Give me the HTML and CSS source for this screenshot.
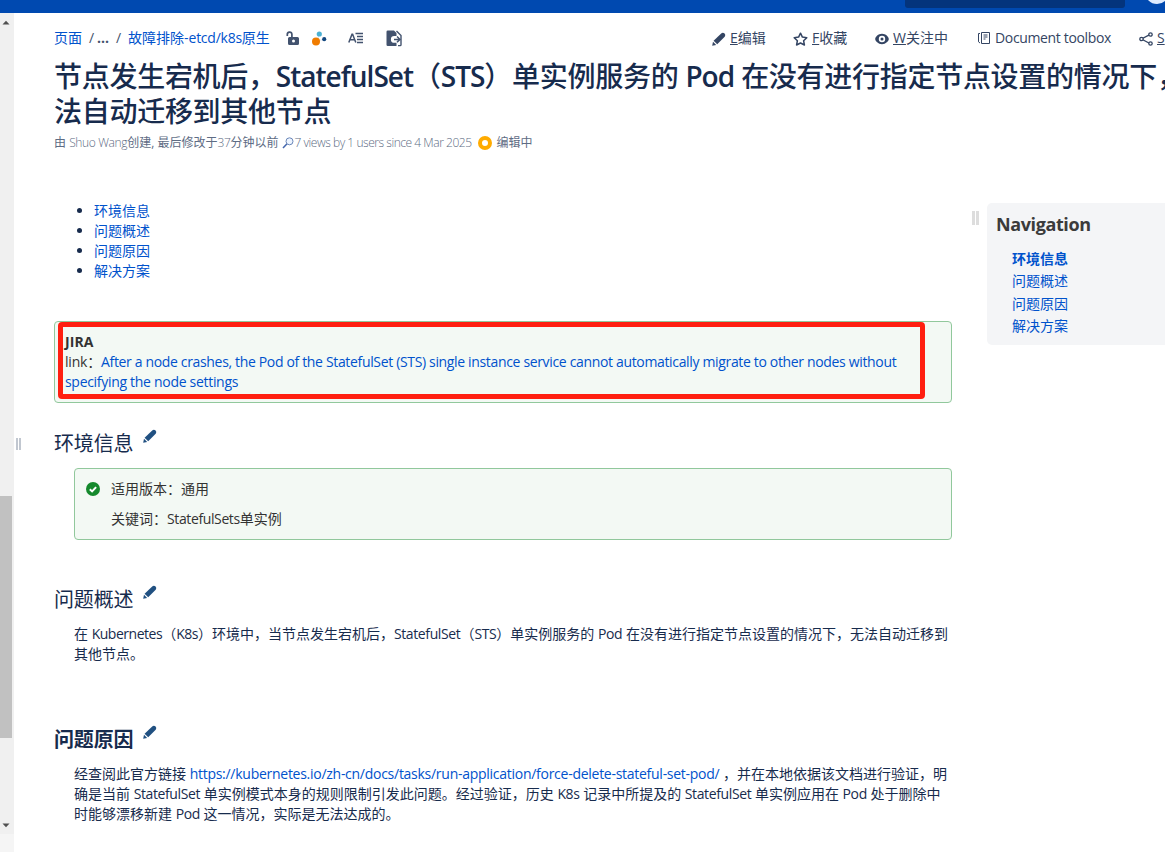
FILE: index.html
```html
<!DOCTYPE html>
<html lang="zh-CN">
<head>
<meta charset="utf-8">
<title>Confluence</title>
<link rel="stylesheet" href="styles.css">
</head>
<body>
<svg width="0" height="0" class="defs">
  <symbol id="pencil" viewBox="0 0 14 14"><path d="M1.600 8.700 9.200 1.400Q11 0 12.600 1.600 14 3.200 12.700 4.700L5.200 12.300Z"/><path d="M1 9.800 4.200 13 .2 13.800Z"/></symbol>
</svg>
<div class="app">
  <header class="topbar"><div class="search"></div><div class="help"></div></header>
  <div class="body">
    <aside class="rail">
      <svg class="arrow-up" width="8" height="5" viewBox="0 0 8 5"><path d="M.5 4.500h7L4 .8Z"/></svg>
      <div class="thumb"></div>
      <svg class="arrow-down" width="8" height="5" viewBox="0 0 8 5"><path d="M.5.5h7L4 4.200Z"/></svg>
      <div class="rail-end"></div>
    </aside>
    <div class="splitter"><i></i><i></i></div>
    <main class="page">
      <div class="toolbar">
        <nav class="crumbs">
          <a>页面</a><span>/</span><b>...</b><span>/</span><a>故障排除-<span class="path">etcd/k8s</span>原生</a>
          <svg width="14" height="15" viewBox="0 0 14 15"><path d="M1.300 5V3.600a2.300 2.300 0 0 1 4.600-.3V7" fill="none" stroke="#42526e" stroke-width="1.700"/><path fill-rule="evenodd" d="M3.500 6h8A1.500 1.500 0 0 1 13 7.500v5a1.500 1.500 0 0 1-1.500 1.500h-8A1.500 1.500 0 0 1 2 12.500v-5A1.500 1.500 0 0 1 3.500 6Zm4 2.600a1.500 1.500 0 1 0 0 3 1.500 1.500 0 0 0 0-3Z"/></svg>
          <svg width="15" height="15" viewBox="0 0 15 15"><path d="M5 10 7.500 3.500M5 10l7-1.700" stroke="#d9dde5" stroke-width=".8"/><circle cx="4" cy="10.400" r="4" fill="#f07c00"/><circle cx="7.300" cy="3" r="2.600" fill="#4cb1d3"/><circle cx="12.200" cy="8.200" r="2.100" fill="#12477f"/></svg>
          <svg width="16" height="12" viewBox="0 0 16 12"><path d="M.8 10.500 4 2.200h.6l3.200 8.300M2 7.800h4.700" fill="none" stroke="#42526e" stroke-width="1.500"/><path d="M7.500 1.500H15M9 4.500h6M9 7.500h6M9 10.500h6" stroke="#42526e" stroke-width="1.300"/></svg>
          <svg width="17" height="17" viewBox="0 0 17 17"><path d="M1.800.5H8L10.500 3v3H8.300a3.400 3.400 0 0 0 0 6.800h2.200V16H1.800A1.300 1.300 0 0 1 .5 14.700V1.800A1.300 1.300 0 0 1 1.800.5Z"/><path d="M10.500 1 15 5.500v9.200a.9.900 0 0 1-.9.900H12" fill="none" stroke="#42526e" stroke-width="1.400"/><path d="M9 7.300H7.800a2 2 0 0 0 0 4H9M7.500 9.300h6" fill="none" stroke="#fff" stroke-width="1.300"/><path d="M8 9.400h5M11 6.500l3 2.900-3 2.900" fill="none" stroke="#42526e" stroke-width="1.500"/></svg>
        </nav>
        <div class="actions">
          <a><svg width="14" height="14"><use href="#pencil"/></svg><span><u>E</u>编辑</span></a>
          <a><svg width="15" height="14" viewBox="0 0 15 14"><path d="m7.500 1.200 1.900 3.900 4.400.6-3.200 3 .8 4.300-3.900-2-3.900 2 .8-4.300-3.200-3 4.400-.6Z" fill="none" stroke="#344563" stroke-width="1.500" stroke-linejoin="round"/></svg><span><u>F</u>收藏</span></a>
          <a><svg width="14" height="12" viewBox="0 0 14 12"><path fill-rule="evenodd" d="M7 .8c3.700 0 6.800 3.200 6.800 5.200S10.700 11.200 7 11.200.2 8 .2 6 3.300.8 7 .8Zm0 2a3.200 3.200 0 1 0 0 6.400 3.200 3.200 0 0 0 0-6.400Z"/><circle cx="7" cy="6" r="1.500"/></svg><span><u>W</u>关注中</span></a>
          <a><svg class="doc" width="12" height="12" viewBox="0 0 12 12"><path d="M3.500.5h8v11h-8ZM2 1.500H.5v8.300L2 11M5.500 3h4M5.500 5h4M5.500 7h2" fill="none" stroke="#344563"/></svg><span class="toolbox">Document toolbox</span></a>
          <a><svg width="14" height="14" viewBox="0 0 14 14"><path d="M10.800 2.600 2.500 7l8.300 4.500" fill="none" stroke="#344563" stroke-width="1.300"/><g fill="#fff" stroke="#344563" stroke-width="1.300"><circle cx="11.500" cy="2.500" r="1.700"/><circle cx="2.500" cy="7" r="1.700"/><circle cx="11.500" cy="11.500" r="1.700"/></g></svg><span><u>S</u></span></a>
        </div>
      </div>
      <h1>节点发生宕机后，<span class="en">StatefulSet</span>（<span class="en">STS</span>）单实例服务的 <span class="en">Pod</span> 在没有进行指定节点设置的情况下，<br>法自动迁移到其他节点</h1>
      <div class="meta"><span class="by">由 <span class="en">Shuo Wang</span>创建, 最后修改于<span class="en">37</span>分钟以前</span>
        <svg width="12" height="12" viewBox="0 0 12 12"><circle cx="7.500" cy="4.300" r="3.500" fill="#eef5ff" stroke="#6a86b8"/><path d="M4.800 7 1 11" stroke="#4366ad" stroke-width="1.500"/></svg>
        <span class="views">7 views by 1 users since 4 Mar 2025</span><i class="ring"></i><span>编辑中</span></div>
      <div class="columns">
        <article class="content">
          <ul class="toc"><li><a>环境信息</a></li><li><a>问题概述</a></li><li><a>问题原因</a></li><li><a>解决方案</a></li></ul>
          <section class="panel jira"><b>JIRA</b><br><span class="link">link：</span><a class="l1">After a node crashes, the Pod of the StatefulSet (STS) single instance service cannot automatically migrate to other nodes without</a><br><a class="l2">specifying the node settings</a><div class="highlight"></div></section>
          <h2 class="env">环境信息<svg width="14" height="14"><use href="#pencil"/></svg></h2>
          <section class="panel tip">
            <svg width="14" height="14" viewBox="0 0 14 14"><circle cx="7" cy="7" r="7" fill="#14892c"/><path d="m3.800 7.200 2.300 2.200 4-4.300" fill="none" stroke="#fff" stroke-width="2"/></svg>
            <div><p>适用版本：通用</p><p>关键词：<span class="en">StatefulSets</span>单实例</p></div>
          </section>
          <h2 class="overview">问题概述<svg width="14" height="14"><use href="#pencil"/></svg></h2>
          <p class="para">在 <span class="en k8s">Kubernetes</span>（<span class="en k8s">K8s</span>）环境中，当节点发生宕机后，<span class="en">StatefulSet</span>（<span class="en">STS</span>）单实例服务的 <span class="en">Pod</span> 在没有进行指定节点设置的情况下，无法自动迁移到<br>其他节点。</p>
          <h2 class="cause">问题原因<svg width="14" height="14"><use href="#pencil"/></svg></h2>
          <p class="para">经查阅此官方链接 <a class="url">https://kubernetes.io/zh-cn/docs/tasks/run-application/force-delete-stateful-set-pod/</a> ，并在本地依据该文档进行验证，明<br>确是当前 <span class="en">StatefulSet</span> 单实例模式本身的规则限制引发此问题。经过验证，历史 <span class="en">K8s</span> 记录中所提及的 <span class="en">StatefulSet</span> 单实例应用在 <span class="en">Pod</span> 处于删除中<br>时能够漂移新建 <span class="en">Pod</span> 这一情况，实际是无法达成的。</p>
        </article>
        <div class="grip"><i></i><i></i></div>
        <aside class="nav"><h3>Navigation</h3><a class="current">环境信息</a><a>问题概述</a><a>问题原因</a><a>解决方案</a></aside>
      </div>
    </main>
  </div>
</div>
</body>
</html>
```
FILE: styles.css
```css
* { box-sizing: border-box; }
body { margin: 0; overflow: hidden; background: #fff; color: #172b4d; font: 14px/20px "Open Sans", "Noto Sans CJK SC", sans-serif; text-autospace: no-autospace; text-spacing-trim: space-all; }
h1, h2, h3, p, ul { margin: 0; padding: 0; }
a { color: #0052cc; text-decoration: none; }
svg { display: block; flex: none; fill: #42526e; }
.defs { position: absolute; }
.en { letter-spacing: -.38px; }
.k8s { letter-spacing: -.48px; }
.path { letter-spacing: -.25px; }
.url { letter-spacing: -.27px; }
.app { width: 1165px; height: 852px; overflow: hidden; display: flex; flex-direction: column; }
.topbar { height: 13px; flex: none; background: #0049b0; display: flex; padding-left: 905px; overflow: hidden; }
.search { width: 220px; height: 8px; flex: none; background: #04347c; border-radius: 0 0 3px 3px; }
.help { width: 24px; height: 24px; flex: none; margin: -20px 0 0 20px; border-radius: 50%; background: #deebff; }
.body { display: flex; flex: 1; min-height: 0; }
.rail { width: 14px; flex: none; background: #f0f0f0; display: flex; flex-direction: column; }
.rail svg { fill: #505050; margin-left: 2px; }
.rail .arrow-up { margin-top: 7px; }
.thumb { width: 12px; height: 242px; margin-top: 471px; background: #c1c1c1; }
.rail .arrow-down { margin-top: 85px; }
.rail-end { margin-top: 6px; flex: 1; background: #f5f5f5; }
.splitter { width: 40px; flex: none; display: flex; gap: 1px; padding: 425px 0 0 2px; }
.splitter i { width: 2px; height: 12px; background: #c1c7d0; }
.page { flex: 1; min-width: 0; overflow: hidden; white-space: nowrap; }
.toolbar { height: 46px; display: flex; padding: 4px 0; }
.crumbs { width: 658px; flex: none; display: grid; grid-template-columns: 35px 8px 19px 12px 158px 26px 36px 38px 20px; align-items: center; padding-top: 4px; }
.crumbs span, .crumbs b { color: #42526e; }
.crumbs a span { color: inherit; }
.actions { flex: none; display: grid; grid-template-columns: 81px 82px 103px 161px 30px; align-items: center; padding-top: 4px; }
.actions a { display: flex; align-items: center; gap: 4px; color: #344563; }
.actions svg { fill: #344563; margin-top: 2px; }
.actions .doc { margin-top: 0; margin-right: 1px; }
.toolbox { letter-spacing: -.35px; }
h1 { font-size: 28px; line-height: 35px; font-weight: 500; letter-spacing: -.28px; }
h1 .en { font-weight: 600; letter-spacing: -1px; }
.meta { height: 20px; margin-top: 4px; display: flex; align-items: center; font-size: 12px; color: #5e6c84; }
.meta .en { font-weight: 300; letter-spacing: -.35px; }
.views { font-weight: 300; letter-spacing: -.46px; }
.meta svg { margin-left: 4px; }
.ring { width: 14px; height: 14px; border: 4.500px solid #ffab00; border-radius: 50%; margin: 0 5px 0 6px; }
.columns { display: flex; margin-top: 48px; }
.content { width: 898px; flex: none; }
.toc { padding-left: 40px; }
.panel { border: 1px solid #91c89c; background: #f3f9f4; border-radius: 4px; color: #333; }
.jira { position: relative; height: 82px; margin-top: 40px; padding: 10px; }
.highlight { position: absolute; left: 3px; top: 0; width: 867px; height: 77px; border: 5px solid #ff1f10; border-radius: 4px; }
.jira b { letter-spacing: .1px; }
.link { letter-spacing: -.2px; }
.l1 { letter-spacing: -.34px; }
.l2 { letter-spacing: -.3px; }
h2 { height: 28px; display: flex; font-size: 20px; line-height: 28px; font-weight: 400; letter-spacing: -.16px; }
h2 svg { fill: #205081; margin-left: 10px; }
.env { margin-top: 26px; line-height: 30px; }
.tip { height: 72px; margin: 11px 0 0 20px; padding: 10px 11px; display: flex; gap: 11px; }
.tip svg { margin-top: 3px; }
.tip p + p { margin-top: 10px; }
.overview { margin-top: 45px; height: 29px; line-height: 30px; }
.para { margin: 10px 0 0 20px; }
.cause { margin-top: 61px; height: 29px; line-height: 30px; font-weight: 700; }
.grip { width: 35px; flex: none; display: flex; gap: 1px; padding: 10px 0 0 20px; }
.grip i { width: 3px; height: 14px; background: #ddd; }
.nav { width: 230px; height: 142px; margin-top: 2px; flex: none; background: #f4f5f7; border-radius: 5px; padding: 9px; display: flex; flex-direction: column; }
.nav h3 { font-size: 18px; line-height: 25px; letter-spacing: -.4px; color: #3b3b3b; margin-bottom: 11px; }
.nav a { margin-left: 16px; line-height: 22.400px; }
.nav .current { font-weight: 700; }
```
